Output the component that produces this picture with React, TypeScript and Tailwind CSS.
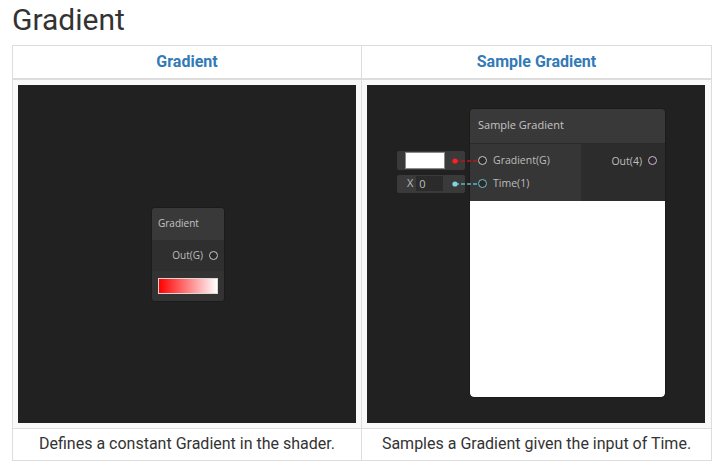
import React from 'react'

const nodeFont = { fontFamily: '"Open Sans", "Noto Sans", sans-serif' }

// Small port circle used on shader graph nodes
function Port({ color = '#c8c8c8' }: { color?: string }) {
  return (
    <span
      className="inline-block w-[9px] h-[9px] rounded-full border-[1.5px] bg-[#2a2a2a]"
      style={{ borderColor: color }}
    />
  )
}

function GradientCanvas() {
  return (
    <div className="relative w-[338px] h-[338px] bg-[#212121] overflow-hidden" style={nodeFont}>
      <div className="absolute left-[133px] top-[122px] w-[74px] rounded-[4px] overflow-hidden bg-[#2e2e2e] border border-[#1b1b1b]">
        <div className="h-[32px] bg-[#393939] flex items-center px-[6px] text-[10px] text-[#c4c4c4]">
          Gradient
        </div>
        <div className="h-[31px] flex items-center justify-end gap-[6px] pr-[6px] text-[10px] text-[#bdbdbd] bg-[#2f2f2f]">
          <span>Out(G)</span>
          <Port />
        </div>
        <div className="h-[30px] flex items-center px-[6px] bg-[#333333]">
          <div className="w-[60px] h-[16px] border border-[#d9d9d9] bg-[linear-gradient(to_right,#ff0000,#ffffff)]" />
        </div>
      </div>
    </div>
  )
}

function SampleGradientCanvas() {
  return (
    <div className="relative w-[338px] h-[338px] bg-[#212121] overflow-hidden" style={nodeFont}>
      {/* inline input boxes */}
      <div className="absolute left-[30px] top-[66px] w-[68px] h-[19px] bg-[#3a3a3a] rounded-[2px] flex items-center px-[8px]">
        <div className="w-[40px] h-[17px] bg-white border border-[#8a8a8a]" />
      </div>
      <div className="absolute left-[30px] top-[90px] w-[68px] h-[18px] bg-[#3a3a3a] rounded-[2px] flex items-center pl-[10px] gap-[3px] text-[11px] text-[#bdbdbd]">
        <span>X</span>
        <span className="w-[27px] h-[15px] bg-[#2b2b2b] pl-[3px] leading-[15px]">0</span>
      </div>

      <svg className="absolute left-0 top-0 z-10" width="338" height="338">
        <line x1="88" y1="76" x2="112" y2="76" stroke="#c01515" strokeWidth="1.3" strokeDasharray="4 2" />
        <circle cx="88" cy="76" r="2.6" fill="#ff2020" />
        <line x1="88" y1="99" x2="112" y2="99" stroke="#5fb7c0" strokeWidth="1.3" strokeDasharray="4 2" />
        <circle cx="88" cy="99" r="2.6" fill="#7fd6df" />
      </svg>

      <div className="absolute left-[102px] top-[23px] w-[197px] rounded-[5px] overflow-hidden border border-[#1b1b1b] bg-[#2b2b2b]">
        <div className="h-[35px] bg-[#393939] flex items-center px-[8px] text-[11px] text-[#c4c4c4] border-b border-[#2a2a2a]">
          Sample Gradient
        </div>
        <div className="flex h-[57px]">
          <div className="w-[111px] bg-[#363636] flex flex-col pt-[10px] gap-[9px] pl-[8px] text-[10.5px] text-[#bdbdbd]">
            <div className="flex items-center gap-[6px] h-[14px]">
              <Port color="#c8c8c8" />
              <span>Gradient(G)</span>
            </div>
            <div className="flex items-center gap-[6px] h-[14px]">
              <Port color="#6cc4cd" />
              <span>Time(1)</span>
            </div>
          </div>
          <div className="flex-1 bg-[#2c2c2c] flex items-start justify-end pt-[10px] pr-[8px] gap-[6px] text-[10.5px] text-[#bdbdbd]">
            <span className="h-[14px] leading-[14px]">Out(4)</span>
            <span className="h-[14px] flex items-center">
              <Port color="#d9b2d9" />
            </span>
          </div>
        </div>
        <div className="h-[196px] bg-white rounded-b-[4px]" />
      </div>
    </div>
  )
}

export default function App() {
  return (
    <div className="w-[718px] h-[468px] bg-white pt-[2px] px-[12px]" style={{ fontFamily: 'Roboto, "Liberation Sans", sans-serif' }}>
      <h1 className="text-[30px] leading-[36px] text-[#333333] font-normal mb-[7px]">Gradient</h1>
      <table className="w-[700px] border-collapse border border-[#dddddd] table-fixed">
        <thead>
          <tr className="border-b-2 border-[#dddddd]">
            <th className="w-[349px] h-[33px] border-r border-[#dddddd] text-[16px] font-bold text-[#337ab7] text-center align-middle">
              Gradient
            </th>
            <th className="h-[33px] text-[16px] font-bold text-[#337ab7] text-center align-middle">
              Sample Gradient
            </th>
          </tr>
        </thead>
        <tbody>
          <tr className="bg-[#f9f9f9] border-b border-[#dddddd]">
            <td className="p-[5px] border-r border-[#dddddd]">
              <GradientCanvas />
            </td>
            <td className="p-[5px]">
              <SampleGradientCanvas />
            </td>
          </tr>
          <tr>
            <td className="h-[32px] border-r border-[#dddddd] text-center text-[16px] text-[#333333]">
              Defines a constant Gradient in the shader.
            </td>
            <td className="h-[32px] text-center text-[16px] text-[#333333]">
              Samples a Gradient given the input of Time.
            </td>
          </tr>
        </tbody>
      </table>
    </div>
  )
}
